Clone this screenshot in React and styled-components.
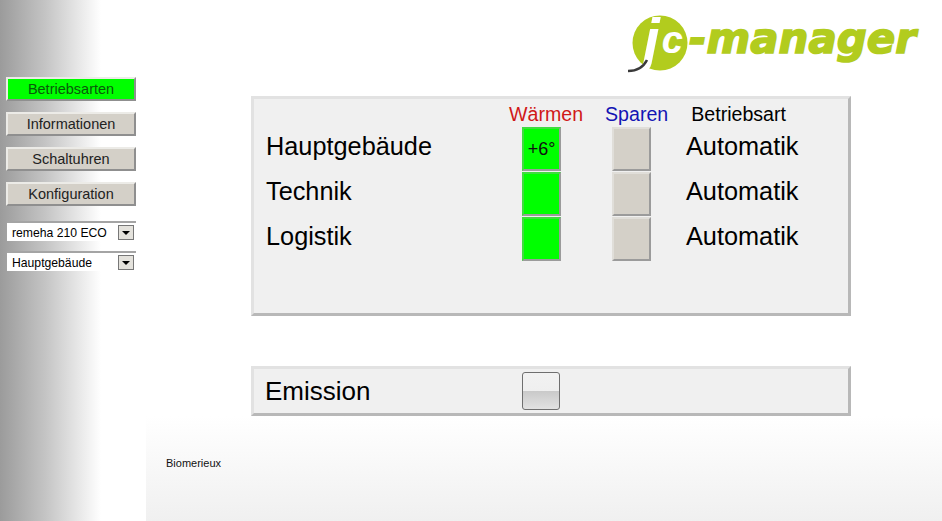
import React from "react";
import styled, { createGlobalStyle } from "styled-components";

const GlobalStyle = createGlobalStyle`
  html, body {
    margin: 0;
    padding: 0;
    background: #fff;
    font-family: "Liberation Sans", Arial, sans-serif;
    color: #000;
  }
`;

const Page = styled.div`
  display: grid;
  grid-template-columns: 146px 1fr;
  width: 942px;
  height: 521px;
  overflow: hidden;
`;

const Sidebar = styled.nav`
  display: flex;
  flex-direction: column;
  align-items: flex-start;
  padding: 77px 0 0 6px;
  background: linear-gradient(to right, #9b9b9b 0, #c4c4c4 45px, #ffffff 101px);
`;

const NavButton = styled.div`
  box-sizing: border-box;
  width: 130px;
  height: 24px;
  margin-bottom: 11px;
  display: flex;
  align-items: center;
  justify-content: center;
  font-size: 14.5px;
  color: ${(p) => (p.$active ? "#0a5a0a" : "#222")};
  background: ${(p) => (p.$active ? "#00ff00" : "#d4d0c8")};
  border: 2px solid;
  border-color: #ecebe7 #8f8f8f #8f8f8f #ecebe7;
`;

const Select = styled.div`
  box-sizing: border-box;
  width: 129px;
  height: 20px;
  margin: ${(p) => (p.$first ? "4px 0 10px 1px" : "0 0 0 1px")};
  padding: 1px 2px 0 5px;
  display: flex;
  align-items: center;
  justify-content: space-between;
  font-size: 12.2px;
  background: #fff;
  border-top: 2px solid #a4a4a4;
`;

const SelectArrow = styled.span`
  box-sizing: border-box;
  width: 16px;
  height: 15px;
  display: flex;
  align-items: center;
  justify-content: center;
  background: #e4e2dc;
  border: 1px solid #777;

  &::after {
    content: "";
    border-left: 4px solid transparent;
    border-right: 4px solid transparent;
    border-top: 4px solid #000;
  }
`;

const Main = styled.main`
  display: flex;
  flex-direction: column;
`;

const Header = styled.header`
  height: 96px;
  display: flex;
  justify-content: flex-end;
  align-items: flex-start;
`;

const Logo = styled.svg`
  display: block;
  width: 332px;
  height: 90px;
`;

const Panel = styled.section`
  box-sizing: border-box;
  width: 600px;
  margin-left: 105px;
  background: #f0f0f0;
  border: 3px solid;
  border-color: #e2e2e2 #b8b8b8 #b8b8b8 #e2e2e2;
`;

const ZonePanel = styled(Panel)`
  height: 220px;
  padding: 0 0 0 12px;
  margin-bottom: 50px;
`;

const EmissionPanel = styled(Panel)`
  height: 50px;
  padding: 0 0 0 11px;
  display: grid;
  grid-template-columns: 257px 38px;
  align-items: center;
`;

const ColumnHeads = styled.div`
  height: 28px;
  padding-left: 243px;
  display: flex;
  align-items: flex-end;
  font-size: 19.6px;
  line-height: 26px;
`;

const ColumnHead = styled.span`
  color: ${(p) => p.$color};
  margin-right: ${(p) => p.$gap}px;
`;

const Row = styled.div`
  display: grid;
  grid-template-columns: 256px 90px 74px 1fr;
  height: 45px;
  align-items: start;
`;

const BigLabel = styled.span`
  font-size: ${(p) => p.$size || 25.3}px;
  line-height: 39px;
`;

const Tile = styled.div`
  box-sizing: border-box;
  width: 39px;
  height: 44px;
  padding-top: 1px;
  display: flex;
  align-items: center;
  justify-content: center;
  font-size: 18px;
  color: #111;
  background: ${(p) => (p.$on ? "#00ff00" : "#d4d0c8")};
  border: 2px solid;
  border-color: ${(p) => (p.$on ? "#3fdc3f" : "#e0ded9")} #9b9b9b #9b9b9b ${(p) => (p.$on ? "#3fdc3f" : "#e0ded9")};
`;

const GlossButton = styled.div`
  box-sizing: border-box;
  width: 38px;
  height: 38px;
  border: 1px solid #6f6f6f;
  border-radius: 3px;
  background: linear-gradient(to bottom, #f2f2f2 0, #efefef 50%, #c9c9c9 50%, #e2e2e2 100%);
`;

const Footer = styled.footer`
  flex: 1;
  padding: 40px 0 0 20px;
  font-size: 11px;
  line-height: 14px;
  color: #111;
  background: linear-gradient(to bottom, #ffffff 0, #f0f0f0 100%);
`;

const zones = [
  { name: "Hauptgebäude", heat: "+6°" },
  { name: "Technik" },
  { name: "Logistik" },
];

const navItems = ["Betriebsarten", "Informationen", "Schaltuhren", "Konfiguration"];

const App = () => (
  <>
    <GlobalStyle />
    <Page>
      <Sidebar>
        {navItems.map((item, i) => (
          <NavButton key={item} $active={i === 0}>{item}</NavButton>
        ))}
        <Select $first>remeha 210 ECO<SelectArrow /></Select>
        <Select>Hauptgebäude<SelectArrow /></Select>
      </Sidebar>
      <Main>
        <Header>
          <Logo viewBox="0 0 332 90">
            <circle cx="50" cy="43" r="27.5" fill="#b2cc1e" />
            <text x="33" y="60" fontFamily="Liberation Sans" fontWeight="700" fontStyle="italic" fill="#fff">
              <tspan fontSize="60">j</tspan>
              <tspan fontSize="38" dx="2" dy="-7">c</tspan>
            </text>
            <path d="M18 71 C26 71 33 68 37 60" fill="none" stroke="#3a3a3a" strokeWidth="2.5" />
            <text x="79" y="53" fontFamily="DejaVu Sans" fontWeight="700" fontStyle="italic" fontSize="43" fill="#b2cc1e" stroke="#b2cc1e" strokeWidth="1.6" textLength="227" lengthAdjust="spacingAndGlyphs">-manager</text>
          </Logo>
        </Header>
        <ZonePanel>
          <ColumnHeads>
            <ColumnHead $color="#d01818" $gap={22}>Wärmen</ColumnHead>
            <ColumnHead $color="#1414b4" $gap={23}>Sparen</ColumnHead>
            <ColumnHead $color="#000" $gap={0}>Betriebsart</ColumnHead>
          </ColumnHeads>
          {zones.map((zone) => (
            <Row key={zone.name}>
              <BigLabel>{zone.name}</BigLabel>
              <Tile $on>{zone.heat}</Tile>
              <Tile />
              <BigLabel>Automatik</BigLabel>
            </Row>
          ))}
        </ZonePanel>
        <EmissionPanel>
          <BigLabel $size={26}>Emission</BigLabel>
          <GlossButton />
        </EmissionPanel>
        <Footer>Biomerieux</Footer>
      </Main>
    </Page>
  </>
);

export default App;
